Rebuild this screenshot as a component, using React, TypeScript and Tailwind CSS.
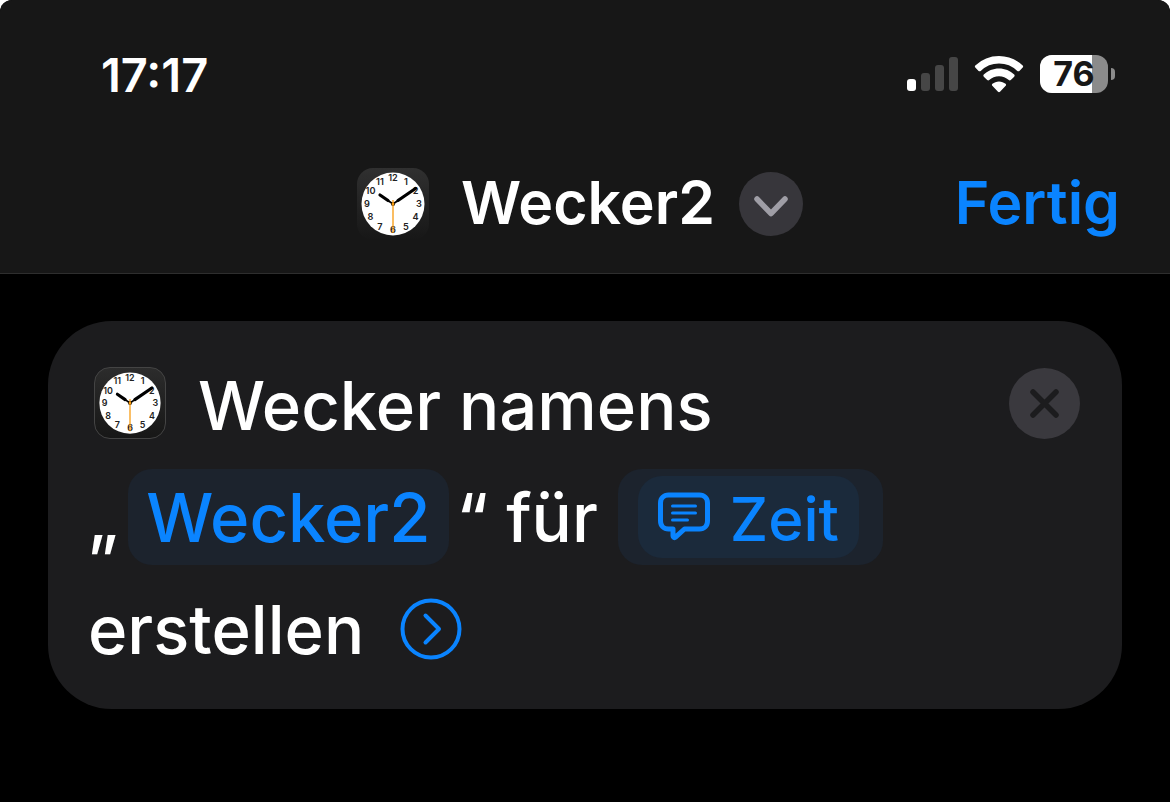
interface IconProps {
  className?: string;
}

const BATTERY_LEVEL = 76;

const SIGNAL_BARS = [
  { height: 'h-3', active: true },
  { height: 'h-[18px]', active: false },
  { height: 'h-[26px]', active: false },
  { height: 'h-[34px]', active: false },
];

const HOURS = [1, 2, 3, 4, 5, 6, 7, 8, 9, 10, 11, 12];

function ClockIcon({ className }: IconProps) {
  return (
    <span
      className={`inline-flex size-18 shrink-0 items-center justify-center rounded-2xl bg-linear-to-b ${className}`}
    >
      <svg viewBox="0 0 72 72" className="size-full" aria-hidden="true">
        <circle cx="36" cy="36" r="31.5" fill="#fff" />
        {HOURS.map((hour) => {
          const angle = (hour * Math.PI) / 6;
          return (
            <text
              key={hour}
              x={36 + Math.sin(angle) * 26}
              y={39.2 - Math.cos(angle) * 25.8}
              textAnchor="middle"
              fontSize="9.2"
              fontWeight="600"
              fill="#222"
            >
              {hour}
            </text>
          );
        })}
        <g stroke="#000" strokeLinecap="round">
          <path d="M36 36 31 32.5M36 36 41 32.5" strokeWidth="1.8" />
          <path d="M31 32.5 23 27M41 32.5 58.5 20.5" strokeWidth="3.2" />
        </g>
        <circle cx="36" cy="36" r="2" fill="#000" />
        <path d="M36 32v33" stroke="#f79a0e" strokeWidth="1.3" />
        <circle cx="36" cy="36" r="1.4" fill="#f79a0e" />
      </svg>
    </span>
  );
}

function WifiIcon() {
  return (
    <svg viewBox="0 0 50 37" className="h-[37px] w-[50px]" fill="#fff" aria-hidden="true">
      <path d="M25 0c9.200 0 17.500 3.600 23.700 9.500.6.600.6 1.500 0 2.100l-3.300 3.300c-.6.600-1.500.6-2.100 0A26.500 26.500 0 0 0 25 7.500 26.500 26.500 0 0 0 6.700 14.900c-.6.600-1.500.6-2.100 0l-3.300-3.300c-.6-.6-.6-1.500 0-2.100A34.300 34.300 0 0 1 25 0z" />
      <path d="M25 12.600c5.900 0 11.200 2.300 15.200 6 .6.600.6 1.500 0 2.100L36.800 24c-.6.600-1.400.6-2 .1A14.600 14.600 0 0 0 25 20.300c-3.800 0-7.200 1.400-9.800 3.800-.6.500-1.400.5-2-.1L9.800 20.700c-.6-.6-.6-1.500 0-2.100 4-3.700 9.300-6 15.200-6z" />
      <path d="M25 25.400c2.500 0 4.800.9 6.600 2.400.6.500.7 1.400.1 2L26 35.700c-.6.600-1.400.6-2 0L18.300 29.800c-.6-.6-.5-1.500.1-2 1.800-1.500 4.100-2.400 6.600-2.400z" />
    </svg>
  );
}

function MessageIcon() {
  return (
    <svg
      viewBox="0 0 52 50"
      className="h-[50px] w-[52px]"
      fill="none"
      stroke="currentColor"
      strokeLinecap="round"
      strokeLinejoin="round"
      aria-hidden="true"
    >
      <path
        d="M10.500 3h31c4.700 0 8 3.300 8 8v18c0 4.700-3.300 8-8 8H26.500l-9 8.200c-1 .9-2.500.3-2.500-1.100V37h-4.500c-4.700 0-8-3.300-8-8V11c0-4.700 3.300-8 8-8z"
        strokeWidth="5"
      />
      <path d="M14.500 14h23M14.500 21h23M14.500 28h15" strokeWidth="3" />
    </svg>
  );
}

function StatusBar() {
  return (
    <div className="flex h-[148px] items-center justify-between pr-[55px] pl-[101px]">
      <time className="text-[47px] leading-none font-semibold">17:17</time>
      <div className="flex items-center gap-4">
        <div className="flex items-end gap-[5px]">
          {SIGNAL_BARS.map((bar) => (
            <span
              key={bar.height}
              className={`w-[9px] rounded-[3px] ${bar.height} ${bar.active ? 'bg-white' : 'bg-[#464646]'}`}
            />
          ))}
        </div>
        <WifiIcon />
        <div className="flex items-center gap-[3px]">
          <div className="relative flex h-[38px] w-[68px] items-center justify-center rounded-xl bg-[#8b8b8b]">
            <span
              className="absolute inset-y-0 left-0 rounded-l-xl bg-white"
              style={{ width: `${BATTERY_LEVEL}%` }}
            />
            <span className="relative text-[34px] leading-none font-bold text-[#171717]">
              {BATTERY_LEVEL}
            </span>
          </div>
          <span className="h-3 w-1 rounded-r-full bg-[#8b8b8b]" />
        </div>
      </div>
    </div>
  );
}

function TitleBar() {
  return (
    <div className="grid h-[125px] grid-cols-[1fr_auto_1fr] items-start pr-[50px] pl-[40px]">
      <button type="button" className="col-start-2 mt-5 flex h-18 items-center">
        <ClockIcon className="from-[#303030] to-[#171717]" />
        <span className="ml-8 pb-1 text-[59px] leading-none font-semibold">Wecker2</span>
        <span className="ml-6 flex size-16 items-center justify-center rounded-full bg-[#37363b]">
          <svg viewBox="0 0 64 64" className="size-16" fill="none" aria-hidden="true">
            <path
              d="M18 27 32 41.500 46 27"
              stroke="#9f9ea6"
              strokeWidth="5.500"
              strokeLinecap="round"
              strokeLinejoin="round"
            />
          </svg>
        </span>
      </button>
      <button
        type="button"
        className="mt-5 h-18 justify-self-end pb-1 text-[59px] leading-none font-semibold text-[#0a84ff]"
      >
        Fertig
      </button>
    </div>
  );
}

function ActionCard() {
  return (
    <section className="mx-12 mt-[47px] rounded-[64px] bg-[#1c1c1e] pt-[26px] pr-[42px] pb-6 pl-10 text-[67px] leading-none font-medium">
      <div className="flex h-28 items-center">
        <ClockIcon className="ml-1.5 border border-[#444] from-[#2c2c2c] to-[#171717]" />
        <span className="ml-8 pt-1">Wecker namens</span>
        <button
          type="button"
          aria-label="Aktion entfernen"
          className="ml-auto size-[71px] rounded-full bg-[#3a393e]"
        >
          <svg viewBox="0 0 71 71" className="size-full" fill="none" aria-hidden="true">
            <path
              d="M24 24 47 47M47 24 24 47"
              stroke="#1c1c1e"
              strokeWidth="5.500"
              strokeLinecap="round"
            />
          </svg>
        </button>
      </div>

      <div className="mt-0.5 flex h-28 items-center">
        <span>„</span>
        <button
          type="button"
          className="ml-2.5 flex h-24 items-center rounded-3xl bg-[#1c232d] px-[18px] text-[#0a84ff]"
        >
          Wecker2
        </button>
        <span className="ml-2">“ für</span>
        <div className="ml-5 flex h-24 items-center rounded-3xl bg-[#1c232d] pr-6 pl-5 text-[#0a84ff]">
          <button
            type="button"
            className="flex h-[82px] items-center gap-5 rounded-3xl bg-[#1b2a3b] px-5 text-[60px]"
          >
            <MessageIcon />
            <span className="pt-1">Zeit</span>
          </button>
        </div>
      </div>

      <div className="flex h-28 items-center">
        <span>erstellen</span>
        <button type="button" aria-label="Mehr anzeigen" className="ml-9 text-[#0a84ff]">
          <svg
            viewBox="0 0 62 62"
            className="size-[62px]"
            fill="none"
            stroke="currentColor"
            strokeWidth="4"
            strokeLinecap="round"
            strokeLinejoin="round"
            aria-hidden="true"
          >
            <circle cx="31" cy="31" r="28.500" />
            <path d="M25.500 17.500 39 31 25.500 44.500" />
          </svg>
        </button>
      </div>
    </section>
  );
}

export default function App() {
  return (
    <main className="min-h-screen overflow-hidden rounded-t-xl bg-black font-['Inter','Liberation_Sans',sans-serif] text-white">
      <header className="border-b border-[#2e2e2e] bg-[#171717]">
        <StatusBar />
        <TitleBar />
      </header>
      <ActionCard />
    </main>
  );
}
